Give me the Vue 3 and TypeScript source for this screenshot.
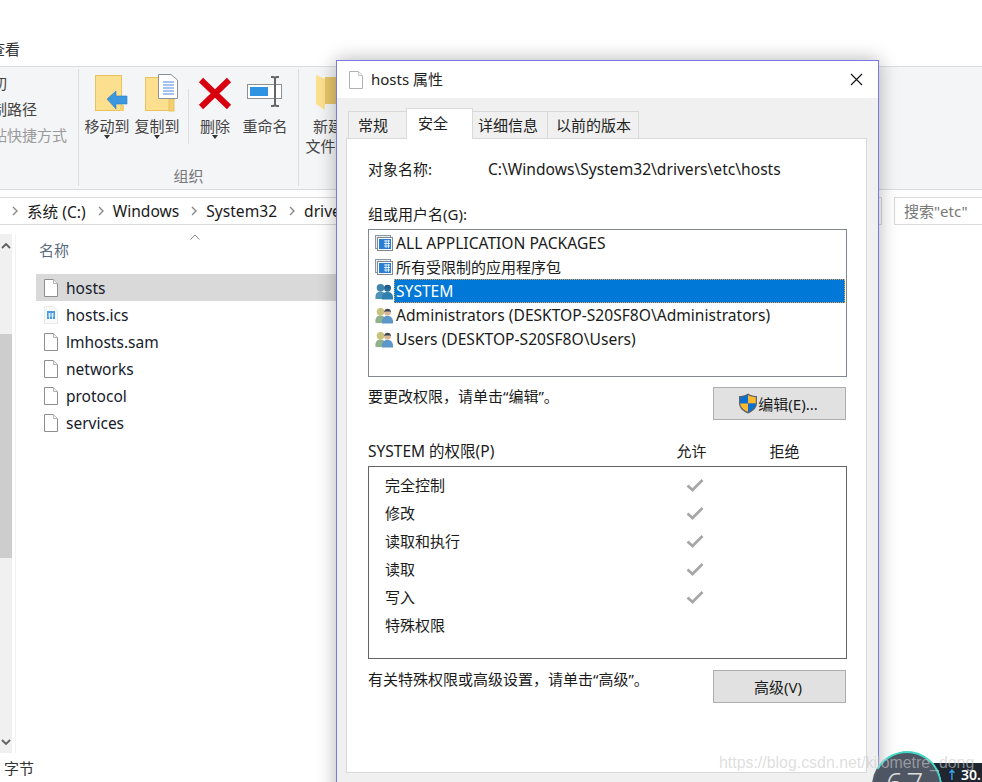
<script setup lang="ts">
const files = [
  { name: 'hosts', kind: 'doc', active: true },
  { name: 'hosts.ics', kind: 'cal', active: false },
  { name: 'lmhosts.sam', kind: 'doc', active: false },
  { name: 'networks', kind: 'doc', active: false },
  { name: 'protocol', kind: 'doc', active: false },
  { name: 'services', kind: 'doc', active: false },
]
const tabs = [
  { label: '常规', width: 59, pad: 9 },
  { label: '安全', width: 67, pad: 11, active: true },
  { label: '详细信息', width: 76, pad: 5 },
  { label: '以前的版本', width: 92, pad: 8 },
]
const principals = [
  { name: 'ALL APPLICATION PACKAGES', kind: 'app', latin: true },
  { name: '所有受限制的应用程序包', kind: 'app' },
  { name: 'SYSTEM', kind: 'sys', selected: true, latin: true },
  { name: 'Administrators (DESKTOP-S20SF8O\\Administrators)', kind: 'usr', latin: true },
  { name: 'Users (DESKTOP-S20SF8O\\Users)', kind: 'usr', latin: true },
]
const perms = [
  { name: '完全控制', on: true },
  { name: '修改', on: true },
  { name: '读取和执行', on: true },
  { name: '读取', on: true },
  { name: '写入', on: true },
  { name: '特殊权限', on: false },
]
const crumbs = ['系统 (C:)', 'Windows', 'System32', 'drivers']
</script>

<template>
  <div class="screen">
    <div class="explorer">
      <div class="menu"><span class="menu-item">查看</span></div>

      <div class="ribbon">
        <div class="group clip-group">
          <span class="clip-line">剪切</span>
          <span class="clip-line">复制路径</span>
          <span class="clip-line muted">粘贴快捷方式</span>
        </div>

        <div class="group org-group">
          <div class="tools">
            <div class="tool">
              <svg class="nudge" width="36" height="38" viewBox="0 0 36 38">
                <rect x="1.5" y="1.5" width="26" height="35" fill="#fde08f" stroke="#e8c25e" />
                <rect x="26" y="31" width="4" height="6" fill="#f3cf72" />
                <path d="M13 25 L22 17 L22 22 L33 22 L33 30 L22 30 L22 35 Z" fill="#3a97e0" stroke="#2a7cc0" stroke-width="0.6" />
              </svg>
              <span class="tool-label">移动到</span>
              <i class="caret"></i>
            </div>
            <div class="tool">
              <svg class="nudge" width="36" height="38" viewBox="0 0 36 38">
                <rect x="1.5" y="3.5" width="26" height="33" fill="#fde08f" stroke="#e8c25e" />
                <rect x="25" y="25" width="5" height="12" fill="#f3cf72" stroke="#e8c25e" />
                <path d="M14.5 0.5 H27 L33.5 6 V24.5 H14.5 Z" fill="#fff" stroke="#8a8f99" />
                <path d="M19 8 H30 M19 11 H30 M19 14 H30 M19 17 H30 M19 20 H30" stroke="#4a86d8" stroke-width="1.2" />
              </svg>
              <span class="tool-label">复制到</span>
              <i class="caret"></i>
            </div>
            <i class="tool-sep"></i>
            <div class="tool">
              <svg width="36" height="38" viewBox="0 0 36 38">
                <path d="M4 6 L32 33 M32 6 L4 33" stroke="#d8000f" stroke-width="6" />
              </svg>
              <span class="tool-label">删除</span>
              <i class="caret"></i>
            </div>
            <div class="tool">
              <svg width="38" height="38" viewBox="0 0 38 38">
                <rect x="1.5" y="10.5" width="34" height="14" fill="#fff" stroke="#8f8f8f" />
                <rect x="4" y="13" width="18" height="9" fill="#2f93e4" />
                <path d="M25 3 H27 C28.500 3 29 4 29 5 V30 C29 31 28.500 32 27 32 H25 M33 3 H31 C29.500 3 29 4 29 5 M29 30 C29 31 29.500 32 31 32 H33" fill="none" stroke="#666" stroke-width="2" />
              </svg>
              <span class="tool-label">重命名</span>
            </div>
          </div>
          <span class="group-title">组织</span>
        </div>

        <div class="group new-group">
          <svg width="24" height="38" viewBox="0 0 24 38">
            <path d="M10 3 H24 V30 H10 Z" fill="#e9c66b" />
            <path d="M1 1 L10 5 V36 L1 30 Z" fill="#fde08f" />
          </svg>
          <span class="tool-label wide">新建<br />文件夹</span>
        </div>
      </div>

      <div class="address-row">
        <div class="address">
          <template v-for="c in crumbs" :key="c">
            <svg class="crumb-arrow" width="6" height="10" viewBox="0 0 6 10"><path d="M1 1 L5 5 L1 9" fill="none" stroke="#888" stroke-width="1.4" /></svg>
            <span class="crumb">{{ c }}</span>
          </template>
        </div>
        <div class="search">搜索"etc"</div>
      </div>

      <div class="body">
        <div class="nav-scroll">
          <svg class="nav-arrow" width="10" height="7" viewBox="0 0 10 7"><path d="M1 6 L5 2 L9 6" fill="none" stroke="#606060" stroke-width="1.8" /></svg>
          <div class="nav-thumb"></div>
          <svg class="nav-arrow down" width="10" height="7" viewBox="0 0 10 7"><path d="M1 1 L5 5 L9 1" fill="none" stroke="#606060" stroke-width="1.8" /></svg>
        </div>
        <div class="files">
          <div class="files-head">
            <span>名称</span>
            <svg class="sort" width="10" height="6" viewBox="0 0 10 6"><path d="M0.5 5.5 L5 1 L9.5 5.5" fill="none" stroke="#888" /></svg>
          </div>
          <div v-for="f in files" :key="f.name" class="file" :class="{ active: f.active }">
            <svg v-if="f.kind === 'doc'" width="14" height="18" viewBox="0 0 14 18">
              <path d="M0.5 0.5 H9.5 L13.5 4.5 V17.5 H0.5 Z" fill="#fff" stroke="#8e8e8e" />
              <path d="M9.5 0.5 V4.5 H13.5" fill="#f2f2f2" stroke="#b5b5b5" />
            </svg>
            <svg v-else width="14" height="18" viewBox="0 0 14 18">
              <path d="M0.5 0.5 H9.5 L13.5 4.5 V17.5 H0.5 Z" fill="#fafafa" stroke="#e8e8e8" />
              <rect x="3" y="5" width="8" height="8" fill="#4a9be0" />
              <path d="M4 8 H10 M4 10 H10 M5.500 7 V13 M8.500 7 V13" stroke="#fff" stroke-width="0.7" />
            </svg>
            <span>{{ f.name }}</span>
          </div>
        </div>
      </div>
      <div class="status"><span>字节</span></div>
    </div>

    <div class="dialog">
      <div class="titlebar">
        <svg width="14" height="18" viewBox="0 0 14 18">
          <path d="M0.5 0.5 H9.5 L13.5 4.500 V17.5 H0.5 Z" fill="#fff" stroke="#b0b0b0" />
          <path d="M9.5 0.5 V4.5 H13.5" fill="#f2f2f2" stroke="#c8c8c8" />
        </svg>
        <span class="title">hosts 属性</span>
        <svg class="close" width="13" height="13" viewBox="0 0 13 13"><path d="M1 1 L12 12 M12 1 L1 12" stroke="#111" stroke-width="1.1" /></svg>
      </div>

      <div class="sheet">
        <div class="tabs">
          <div
            v-for="t in tabs"
            :key="t.label"
            class="tab"
            :class="{ active: t.active }"
            :style="{ width: t.width + 'px', paddingLeft: t.pad + 'px' }"
          >{{ t.label }}</div>
        </div>

        <div class="panel">
          <div class="object-row">
            <span class="object-label">对象名称:</span>
            <span class="latin">C:\Windows\System32\drivers\etc\hosts</span>
          </div>

          <div class="caption">组或用户名(G):</div>
          <div class="listbox">
            <div v-for="p in principals" :key="p.name" class="principal" :class="{ selected: p.selected }">
              <svg v-if="p.kind === 'app'" width="18" height="16" viewBox="0 0 18 16">
                <rect x="0.5" y="0.5" width="15" height="13" fill="#e9edf2" stroke="#8c95a0" />
                <rect x="2.500" y="2.500" width="15" height="13" fill="#fff" stroke="#7d8894" />
                <rect x="4" y="4" width="12" height="10" fill="#2a7fd0" />
                <path d="M9 6 H15 M9 8.500 H15 M9 11 H15 M11 5 V13 M13.500 5 V13" stroke="#fff" stroke-width="0.8" />
              </svg>
              <svg v-else width="18" height="17" viewBox="0 0 18 17">
                <path d="M0.500 16 C0 10.500 2 8.500 5.500 8.500 C9 8.500 11 10.500 10.500 16 Z" :fill="p.kind === 'sys' ? '#4f93b8' : '#8fb08a'" />
                <circle cx="5.500" cy="4.800" r="3.800" :fill="p.kind === 'sys' ? '#3f86ac' : '#c9c27e'" />
                <path d="M7 16.500 C6.500 11 9 9 12.500 9 C16 9 18.500 11 18 16.500 Z" :fill="p.kind === 'sys' ? '#2f7fb0' : '#5b97c8'" />
                <circle cx="12.500" cy="5.300" r="3.400" :fill="p.kind === 'sys' ? '#246a97' : '#d8b79a'" />
                <path d="M9.200 5 C9.500 2.500 11 1.800 12.500 1.800 C14.500 1.800 15.800 3 15.900 5 C14 4.600 11.500 4.400 9.200 5 Z" :fill="p.kind === 'sys' ? '#1d5a84' : '#3d4652'" />
              </svg>
              <span class="principal-name" :class="{ latin: p.latin }">{{ p.name }}</span>
            </div>
          </div>

          <div class="action-row edit-row">
            <span class="hint">要更改权限，请单击“编辑”。</span>
            <button class="btn">
              <svg width="20" height="21" viewBox="0 0 20 21">
                <path d="M10 0.5 C7 2.500 4 3 1 3 V10 C1 15 5 18.500 10 20.500 C15 18.500 19 15 19 10 V3 C16 3 13 2.500 10 0.500 Z" fill="#5a6470" />
                <path d="M10 2 V10.500 H2.200 V4.200 C5 4.100 7.500 3.500 10 2 Z" fill="#0a6fd1" />
                <path d="M10 2 C12.500 3.500 15 4.100 17.800 4.200 V10.500 H10 Z" fill="#fdb92e" />
                <path d="M2.200 10.500 H10 V18.800 C6 17.200 2.600 14.500 2.200 10.500 Z" fill="#fdb92e" />
                <path d="M10 10.500 H17.800 C17.400 14.500 14 17.200 10 18.800 Z" fill="#0a6fd1" />
              </svg>
              <span>编辑(E)...</span>
            </button>
          </div>

          <div class="perm-head">
            <span class="perm-title">SYSTEM 的权限(P)</span>
            <span class="perm-col">允许</span>
            <span class="perm-col">拒绝</span>
          </div>
          <div class="perm-box">
            <div v-for="p in perms" :key="p.name" class="perm">
              <span>{{ p.name }}</span>
              <svg v-if="p.on" width="18" height="14" viewBox="0 0 18 14">
                <path d="M1.500 7.500 L6.500 12 L16.500 2" fill="none" stroke="#a8a8a8" stroke-width="2.800" />
              </svg>
            </div>
          </div>

          <div class="action-row adv-row">
            <span class="hint">有关特殊权限或高级设置，请单击“高级”。</span>
            <button class="btn">高级(V)</button>
          </div>
        </div>
      </div>
    </div>

    <div class="meter">
      <div class="gauge"><span>67</span></div>
      <div class="speed"><span class="up">↑</span>30.</div>
    </div>
    <div class="watermark">https://blog.csdn.net/kilometre_dong</div>
  </div>
</template>

<style>
html,
body {
  margin: 0;
  background: #fff;
}
</style>

<style scoped>
.screen {
  position: relative;
  width: 982px;
  height: 782px;
  overflow: hidden;
  background: #fff;
  color: #1a1a1a;
  font-family: "Noto Sans", "Noto Sans CJK SC", sans-serif;
  font-size: 15px;
}
.latin {
  font-size: 15.6px;
}
.explorer {
  display: flex;
  flex-direction: column;
  height: 100%;
}
.menu {
  height: 66px;
  box-sizing: border-box;
  display: flex;
  align-items: flex-end;
  padding-bottom: 7px;
  color: #333;
}
.menu-item {
  margin-left: -10px;
}
.ribbon {
  display: flex;
  height: 124px;
  box-sizing: border-box;
  border-top: 1px solid #dadbdc;
  border-bottom: 1px solid #dadbdc;
  background: #f4f5f7;
  color: #444;
}
.group {
  box-sizing: border-box;
  height: 117px;
  margin-top: 2px;
  border-right: 1px solid #dcdddf;
}
.clip-group {
  width: 79px;
  display: flex;
  flex-direction: column;
  overflow: hidden;
  padding-top: 4px;
  gap: 5px;
}
.clip-line {
  height: 21px;
  line-height: 21px;
  margin-left: -23px;
  white-space: nowrap;
}
.clip-line.muted {
  color: #9a9a9a;
}
.org-group {
  width: 220px;
  display: flex;
  flex-direction: column;
  align-items: center;
  justify-content: space-between;
}
.tools {
  align-self: flex-start;
  display: flex;
  padding-left: 3px;
  padding-top: 5px;
}
.tool {
  width: 50px;
  display: flex;
  flex-direction: column;
  align-items: center;
  position: relative;
}
.nudge {
  position: relative;
  left: 5px;
}
.tool-label {
  line-height: 20px;
  margin-top: 4px;
  white-space: nowrap;
}
.caret {
  width: 0;
  height: 0;
  margin-top: -1px;
  border-left: 3.5px solid transparent;
  border-right: 3.5px solid transparent;
  border-top: 4px solid #333;
}
.tool-sep {
  width: 1px;
  height: 55px;
  margin: 15px 1px 0 6px;
  background: #dcdddf;
}
.group-title {
  color: #777;
  line-height: 20px;
}
.new-group {
  border-right: none;
  padding: 5px 0 0 6px;
  display: flex;
  flex-direction: column;
  width: 60px;
}
.new-group svg {
  margin-left: 10px;
}
.wide {
  width: 46px;
  text-align: center;
}
.address-row {
  display: flex;
  margin-top: 7px;
  height: 28px;
}
.address {
  flex: 1;
  box-sizing: border-box;
  border: 1px solid #d9d9d9;
  border-left: none;
  display: flex;
  align-items: center;
  color: #1a1a1a;
  font-size: 15.6px;
  white-space: nowrap;
}
.crumb-arrow {
  flex: none;
  margin: 0 9px 0 12px;
}
.search {
  width: 88px;
  box-sizing: border-box;
  margin-left: 12px;
  border: 1px solid #d9d9d9;
  border-right: none;
  padding: 2px 0 0 9px;
  color: #777;
  white-space: nowrap;
}
.body {
  flex: 1;
  display: flex;
  padding-top: 9px;
  min-height: 0;
}
.nav-scroll {
  width: 12px;
  height: 519px;
  background: #f0f0f0;
  display: flex;
  flex-direction: column;
  align-items: center;
  padding-top: 8px;
  box-sizing: border-box;
  margin-right: 3px;
  box-shadow: 3px 0 0 #fff, 4px 0 0 #f3f3f3;
}
.nav-arrow {
  flex: none;
}
.nav-arrow.down {
  margin-top: 181px;
}
.nav-thumb {
  width: 12px;
  height: 224px;
  margin-top: 85px;
  background: #cdcdcd;
}
.files {
  flex: 1;
  padding-left: 21px;
}
.files-head {
  position: relative;
  height: 40px;
  box-sizing: border-box;
  padding: 5px 0 0 3px;
  color: #5a6b7d;
}
.sort {
  position: absolute;
  left: 154px;
  top: 0;
}
.file {
  display: flex;
  align-items: center;
  gap: 8px;
  width: 300px;
  height: 27px;
  padding-left: 8px;
  box-sizing: border-box;
  color: #15202c;
  font-size: 15.5px;
}
.file.active {
  background: #d9d9d9;
}
.status {
  height: 19px;
  padding-left: 4px;
  color: #333;
  line-height: 11px;
}
.dialog {
  position: absolute;
  left: 336px;
  top: 60px;
  width: 543px;
  height: 760px;
  box-sizing: border-box;
  border: 1px solid #7a78e2;
  background: #f0f0f0;
  box-shadow: 0 0 18px rgba(0, 0, 0, 0.3);
  display: flex;
  flex-direction: column;
}
.titlebar {
  height: 37px;
  flex: none;
  background: #fff;
  display: flex;
  align-items: center;
  padding: 0 15px 0 12px;
  gap: 8px;
}
.title {
  flex: 1;
  color: #222;
  margin-top: -2px;
}
.sheet {
  padding: 10px 11px 0 9px;
}
.tabs {
  display: flex;
  align-items: flex-end;
  height: 30px;
  padding-left: 3px;
  position: relative;
  z-index: 1;
}
.tab {
  box-sizing: border-box;
  height: 27px;
  border: 1px solid #d9d9d9;
  border-bottom: none;
  background: #f0f0f0;
  line-height: 26px;
  color: #222;
  margin-left: -1px;
  white-space: nowrap;
}
.tab.active {
  height: 31px;
  background: #fff;
  line-height: 29px;
  margin-bottom: -1px;
  position: relative;
}
.panel {
  box-sizing: border-box;
  height: 635px;
  border: 1px solid #d9d9d9;
  background: #fff;
  padding: 0 20px 0 21px;
}
.object-row {
  display: flex;
  margin-top: 19px;
  line-height: 22px;
}
.object-label {
  width: 120px;
}
.caption {
  margin-top: 23px;
  line-height: 22px;
}
.listbox {
  margin-top: 4px;
  box-sizing: border-box;
  width: 479px;
  height: 148px;
  border: 1px solid #828790;
  padding: 1px 1px 0 6px;
}
.principal {
  display: flex;
  align-items: center;
  height: 24px;
}
.principal svg {
  flex: none;
  margin-right: 1px;
}
.principal-name {
  flex: 1;
  line-height: 24px;
  padding-left: 2px;
  white-space: nowrap;
  box-sizing: border-box;
  height: 24px;
}
.principal.selected .principal-name {
  background: #0078d7;
  color: #fff;
  outline: 1px dotted #e0a050;
  outline-offset: -1px;
}
.action-row {
  display: flex;
  justify-content: space-between;
  align-items: flex-start;
  width: 478px;
}
.edit-row {
  margin-top: 10px;
}
.hint {
  line-height: 19px;
}
.btn {
  width: 133px;
  height: 33px;
  box-sizing: border-box;
  border: 1px solid #adadad;
  background: #e1e1e1;
  color: #1a1a1a;
  font: inherit;
  display: flex;
  align-items: center;
  justify-content: center;
  gap: 0;
  padding: 0 3px 0 0;
}
.perm-head {
  display: flex;
  margin-top: 21px;
  line-height: 20px;
  width: 479px;
}
.perm-title {
  width: 277px;
  font-size: 15.5px;
}
.perm-col {
  width: 93px;
  text-align: center;
  white-space: nowrap;
}
.perm-box {
  margin-top: 5px;
  box-sizing: border-box;
  width: 479px;
  height: 193px;
  border: 1px solid #646464;
  padding: 3px 0 0 16px;
}
.perm {
  display: grid;
  grid-template-columns: 301px 18px;
  align-items: center;
  height: 28px;
}
.perm svg {
  margin-top: 1px;
}
.adv-row {
  margin-top: 11px;
}
.meter {
  position: absolute;
  left: 872px;
  top: 751px;
  width: 110px;
  height: 31px;
}
.gauge {
  position: absolute;
  left: 0;
  top: 0;
  width: 70px;
  height: 70px;
  box-sizing: border-box;
  border-radius: 50%;
  background: #4e5563;
  border: 2px solid #565d6b;
  border-top-color: #45d8c8;
  border-right-color: #45d8c8;
  transform: rotate(-15deg);
  z-index: 1;
}
.gauge span {
  display: block;
  transform: rotate(15deg);
  color: #dddddd;
  font-size: 30px;
  font-weight: 300;
  letter-spacing: 3px;
  text-align: center;
  line-height: 66px;
  margin-top: -3px;
}
.speed {
  position: absolute;
  left: 40px;
  top: 12px;
  right: 0;
  height: 19px;
  background: #1f2630;
  color: #fff;
  font-size: 14px;
  font-weight: 600;
  line-height: 24px;
  padding-left: 34px;
}
.up {
  color: #3aa8ee;
  margin-right: 3px;
  font-size: 12px;
}
.watermark {
  position: absolute;
  left: 719px;
  top: 752px;
  color: rgba(200, 200, 200, 0.6);
  font-family: "Liberation Sans", sans-serif;
  font-size: 15.9px;
  line-height: 22px;
  white-space: nowrap;
  z-index: 2;
}
</style>
